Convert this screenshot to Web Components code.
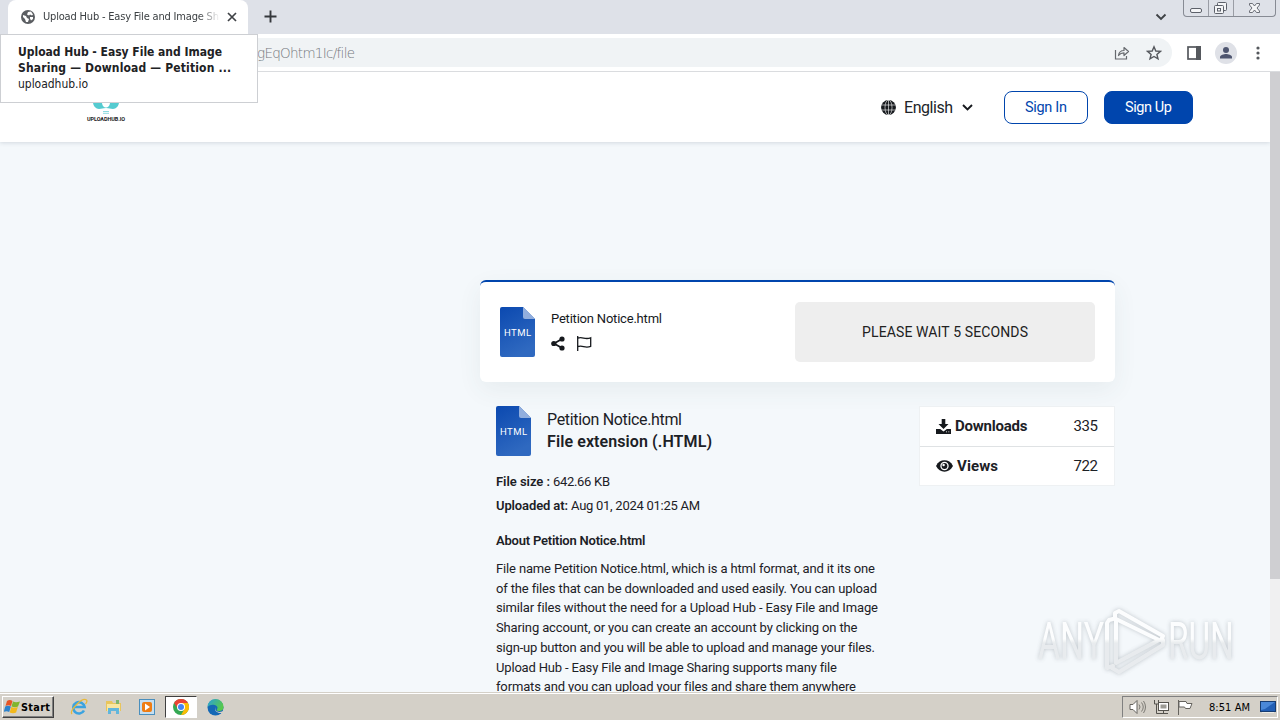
<!DOCTYPE html>
<html lang="en">
<head>
<meta charset="utf-8">
<title>Upload Hub</title>
<style>
  body {
    margin: 0;
    width: 1280px;
    height: 720px;
    overflow: hidden;
    background: #f4f8fb;
    color: #212529;
    font-family: Roboto, "Liberation Sans", sans-serif;
  }
</style>
</head>
<body>
<desktop-screen>
  <browser-chrome slot="chrome"></browser-chrome>
  <site-header slot="page"></site-header>
  <download-card slot="page"></download-card>
  <file-details slot="page"></file-details>
  <task-bar slot="taskbar"></task-bar>
</desktop-screen>

<script>
class BaseElement extends HTMLElement {
  constructor() {
    super();
    this.attachShadow({ mode: 'open' });
  }

  connectedCallback() {
    this.shadowRoot.innerHTML = this.render();
  }
}

// one line of text, tracked so that it fills the width given in "w"
class FitText extends BaseElement {
  render() {
    return `
      <style>
        :host { display: block; white-space: nowrap; width: max-content; }
        span { display: inline-block; }
      </style>
      <span><slot></slot></span>
    `;
  }

  connectedCallback() {
    super.connectedCallback();
    const span = this.shadowRoot.querySelector('span');
    const target = parseFloat(this.getAttribute('w'));
    const count = this.textContent.length;
    const natural = span.getBoundingClientRect().width;
    if (natural && count > 1) {
      span.style.letterSpacing = `${(target - natural) / (count - 1)}px`;
      this.style.width = `${target}px`;
    }
  }
}

class DesktopScreen extends BaseElement {
  render() {
    return `
      <style>
        :host { display: flex; flex-direction: column; height: 720px; position: relative; overflow: hidden; }
        .view { flex: 1; min-height: 0; display: flex; overflow: hidden; }
        .page { flex: 1; overflow: hidden; background: #f4f8fb; }
        .scroll { width: 10px; background: #f0f0f1; }
        .thumb { height: 507px; background: #cfcfd2; }
        any-run { position: absolute; left: 1030px; top: 600px; }
      </style>
      <slot name="chrome"></slot>
      <div class="view">
        <div class="page"><slot name="page"></slot></div>
        <div class="scroll"><div class="thumb"></div></div>
      </div>
      <slot name="taskbar"></slot>
      <any-run></any-run>
    `;
  }
}

class BrowserChrome extends BaseElement {
  render() {
    return `
      <style>
        :host { display: block; height: 72px; position: relative; z-index: 2; color: #3c4043;
          font-family: "DejaVu Sans Condensed", "DejaVu Sans", sans-serif; }
        svg { display: block; flex: none; }
        .strip { height: 34px; background: #dee1e8; display: flex; align-items: flex-start; }
        .tab { margin-left: 8px; width: 240px; height: 34px; box-sizing: border-box; background: #fff;
          border-radius: 8px 8px 0 0; display: flex; align-items: center; padding-left: 13px; }
        .title { width: 177px; margin-left: 8px; overflow: hidden; font-size: 11px; line-height: 18px;
          -webkit-mask-image: linear-gradient(90deg, #000 88%, transparent); mask-image: linear-gradient(90deg, #000 88%, transparent); }
        .close { margin-left: 7px; }
        .plus { margin: 10px 0 0 16px; }
        .down { margin: 13px 0 0 auto; }
        .win { margin: 0 4px 0 16px; width: 93px; height: 17px; box-sizing: border-box; border: 1px solid #878b94;
          border-top: 0; border-radius: 0 0 4px 4px; display: flex; }
        .bar { height: 37px; background: #fff; border-bottom: 1px solid #dadcdf; display: flex; align-items: center; }
        .omni { width: 1172px; height: 29px; background: #f0f3f5; border-radius: 0 15px 15px 0; box-sizing: border-box;
          display: flex; align-items: center; padding: 0 10px 0 257px; color: #74787d; }
        .url { font-family: "DejaVu Sans", sans-serif; font-size: 13.500px; font-weight: 200; }
        .tip { position: absolute; left: 0; top: 34px; width: 258px; height: 69px; box-sizing: border-box; background: #fff;
          border: 1px solid #cdcfd3; padding: 9px 0 0 17px; font-size: 12px; line-height: 16px; color: #202124; }
        .tip b { display: block; font-size: 12px; }
      </style>
      <div class="strip">
        <div class="tab">
          <svg width="14" height="14" viewBox="0 0 14 14"><circle cx="7" cy="7" r="7" fill="#5b5e62"/><path d="M2 5l3 1 1 2 2 1-1 3-2 0-1-3-2-2zM7 2l3-.5 2 3-1 1-2-1-1 1-2-1zM9 7l3 0 0 2-2 1.500-1-2z" fill="#fff"/></svg>
          <div class="title"><fit-text w="176">Upload Hub - Easy File and Image Sh</fit-text></div>
          <svg class="close" width="10" height="10" viewBox="0 0 10 10"><path d="M1 1l8 8M9 1L1 9" stroke="#3f4246" stroke-width="1.700"/></svg>
        </div>
        <svg class="plus" width="13" height="13" viewBox="0 0 13 13"><path d="M6.500 .5v12M.5 6.500h12" stroke="#35383c" stroke-width="1.900"/></svg>
        <svg class="down" width="12" height="8" viewBox="0 0 12 8"><path d="M1.500 1.500L6 6l4.500-4.500" fill="none" stroke="#3f4246" stroke-width="1.900"/></svg>
        <div class="win">
          <svg width="91" height="16" viewBox="0 -1 91 16" fill="none" stroke="#5d616a">
            <path d="M24.500 -1v16M49.500 -1v16" stroke="#9a9da5"/>
            <rect x="6.500" y="7.500" width="11" height="4" rx="1.500" fill="#f4f5f7"/>
            <rect x="33.500" y="1.500" width="9" height="8" rx="1" fill="#f4f5f7"/>
            <rect x="30.500" y="4.500" width="9" height="8" rx="1" fill="#f4f5f7"/><rect x="33.500" y="7.500" width="3" height="2.500"/>
            <path d="M65.500 2.500h3l2 2.500 2-2.500h3v1.500l-2.500 3 2.500 3v1.500h-3l-2-2.500-2 2.500h-3v-1.500l2.500-3-2.500-3z" fill="#f4f5f7" stroke-width=".9"/>
          </svg>
        </div>
      </div>
      <div class="bar">
        <div class="omni">
          <fit-text class="url" w="98">gEqOhtm1Ic/file</fit-text>
          <svg style="margin-left:auto" width="16" height="14" viewBox="0 0 16 14" fill="none" stroke="#66696e" stroke-width="1.200"><path d="M1.500 4v9h11V10"/><path d="M4.500 9.500c.5-3.500 2-5 5.500-5V1.500l4.500 4-4.500 4V6.800c-2.500 0-4 .7-5.500 2.700z" stroke-linejoin="round"/></svg>
          <svg style="margin-left:16px" width="16" height="16" viewBox="0 0 16 16"><path d="M8 1.800l1.800 4.200 4.600.4-3.500 3 1.100 4.500-4-2.400-4 2.400 1.100-4.500-3.500-3 4.600-.4z" fill="none" stroke="#55585d" stroke-width="1.400"/></svg>
        </div>
        <svg style="margin-left:15px" width="14" height="14" viewBox="0 0 14 14"><rect x="1" y="1" width="12" height="12" fill="#fff" stroke="#55585d" stroke-width="1.700"/><path d="M9 0h5v14H9z" fill="#55585d"/></svg>
        <svg style="margin-left:14px" width="22" height="22" viewBox="0 0 22 22"><circle cx="11" cy="11" r="11" fill="#dfe1e7"/><circle cx="11" cy="8" r="3" fill="#4f5670"/><path d="M5 16.500v-1.500c0-2 4-3 6-3s6 1 6 3v1.500z" fill="#4f5670"/></svg>
        <svg style="margin-left:19px" width="4" height="14" viewBox="0 0 4 14" fill="#55585d"><circle cx="2" cy="2" r="1.600"/><circle cx="2" cy="7" r="1.600"/><circle cx="2" cy="12" r="1.600"/></svg>
      </div>
      <div class="tip">
        <b><fit-text w="204">Upload Hub - Easy File and Image</fit-text></b>
        <b><fit-text w="213">Sharing — Download — Petition ...</fit-text></b>
        <fit-text w="70">uploadhub.io</fit-text>
      </div>
    `;
  }
}

class SiteHeader extends BaseElement {
  render() {
    return `
      <style>
        :host { display: flex; align-items: center; height: 70px; background: #fff; padding: 0 77px 0 87px;
          box-shadow: 0 1px 4px rgba(60, 80, 100, .18); position: relative; font-size: 16px; }
        .logo { align-self: flex-start; padding-top: 22px; }
        svg { display: block; }
        .logo fit-text { font-size: 5.500px; line-height: 8px; font-weight: 700; margin-top: 1px; color: #222; }
        .logo svg { margin: 0 auto; }
        .lang { display: flex; align-items: center; margin-left: auto; margin-right: 31px; gap: 8px; }
        .btn { box-sizing: border-box; height: 33px; border: 1px solid #0045ad; border-radius: 8px; display: flex;
          align-items: center; justify-content: center; font-size: 14.500px; color: #0045ad; }
        .in { width: 84px; margin-right: 16px; }
        .up { width: 89px; background: #0045ad; color: #fff; }
      </style>
      <div class="logo">
        <svg width="28" height="20" viewBox="0 0 28 20"><path d="M1 8h9c0 4 2 5.500 4 5.500s4-1.500 4-5.500h9c0 4-3 7-6 7-3 0-3.500-1-7-1s-4 1-7 1c-3 0-6-3-6-7z" fill="#55cbd0"/><path d="M11 17.500h6M11 19.300h6" stroke="#8ddade"/></svg>
        <fit-text w="38">UPLOADHUB.IO</fit-text>
      </div>
      <div class="lang">
        <svg width="15" height="15" viewBox="0 0 15 15"><circle cx="7.500" cy="7.500" r="7.400" fill="#16191d"/><path d="M0 5h15M0 10h15M7.500 0v15" stroke="#fff" stroke-width=".6"/><ellipse cx="7.500" cy="7.500" rx="3.500" ry="7.500" fill="none" stroke="#fff" stroke-width=".6"/></svg>
        <fit-text w="49">English</fit-text>
        <svg style="margin-left:1px" width="11" height="7" viewBox="0 0 11 7"><path d="M1 1l4.500 4.500L10 1" fill="none" stroke="#16191d" stroke-width="1.900"/></svg>
      </div>
      <div class="btn in"><fit-text w="42">Sign In</fit-text></div>
      <div class="btn up"><fit-text w="47">Sign Up</fit-text></div>
    `;
  }
}

class FileIcon extends BaseElement {
  render() {
    return `
      <style>
        :host { display: block; width: 35px; height: 50px; flex: none; }
        svg { display: block; }
        text { font: 400 9.500px Roboto, sans-serif; fill: #fff; }
      </style>
      <svg width="35" height="50" viewBox="0 0 35 50">
        <defs><linearGradient id="g" x1="0" y1="0" x2=".4" y2="1"><stop offset="0" stop-color="#0b49b0"/><stop offset="1" stop-color="#2f69c0"/></linearGradient></defs>
        <path d="M2 0h21l12 12v36a2 2 0 0 1-2 2H2a2 2 0 0 1-2-2V2a2 2 0 0 1 2-2z" fill="url(#g)"/>
        <path d="M23 0l12 12H25a2 2 0 0 1-2-2z" fill="#91aede"/>
        <text x="4" y="29" textLength="27">HTML</text>
      </svg>
    `;
  }
}

class DownloadCard extends BaseElement {
  render() {
    return `
      <style>
        :host { display: flex; align-items: center; box-sizing: border-box; width: 635px; height: 102px; margin: 138px 0 0 480px;
          padding: 0 20px; background: #fff; border-top: 2px solid #0045ad; border-radius: 6px;
          box-shadow: 0 8px 24px rgba(60, 80, 90, .07); }
        .info { margin: 0 0 3px 16px; font-size: 13px; line-height: 18px; color: #16191d; }
        .icons { display: flex; gap: 11px; margin-top: 8px; align-items: center; }
        .wait { margin-left: auto; width: 300px; height: 60px; background: #eee; border-radius: 5px; display: flex;
          align-items: center; justify-content: center; font-size: 14px; color: #212121; }
      </style>
      <file-icon></file-icon>
      <div class="info">
        <fit-text w="111">Petition Notice.html</fit-text>
        <div class="icons">
          <svg width="14" height="15" viewBox="0 0 14 15" fill="#16191d"><path d="M11 3L3 7.500 11 12" fill="none" stroke="#16191d" stroke-width="1.800"/><circle cx="11" cy="3" r="2.600"/><circle cx="2.800" cy="7.500" r="2.600"/><circle cx="11" cy="12" r="2.600"/></svg>
          <svg width="16" height="15" viewBox="0 0 16 15" fill="none" stroke="#16191d" stroke-width="1.300"><path d="M1.700 0v15M1.700 2.200c5-2 7 2 13-.4v8.500c-6 2.500-8-1.700-13 .4"/></svg>
        </div>
      </div>
      <div class="wait"><fit-text w="166">PLEASE WAIT 5 SECONDS</fit-text></div>
    `;
  }
}

class StatRow extends BaseElement {
  render() {
    return `
      <style>
        :host { display: flex; align-items: center; justify-content: space-between; flex: 1; padding: 0 16px; font-size: 15px; }
        .label { display: flex; align-items: center; gap: 4px; font-weight: 700; }
      </style>
      <div class="label"><slot name="icon"></slot><slot name="label"></slot></div>
      <slot></slot>
    `;
  }
}

class FileDetails extends BaseElement {
  render() {
    const lines = [
      ['File name Petition Notice.html, which is a html format, and it its one', 379],
      ['of the files that can be downloaded and used easily. You can upload', 380.5],
      ['similar files without the need for a Upload Hub - Easy File and Image', 381.5],
      ['Sharing account, or you can create an account by clicking on the', 361.5],
      ['sign-up button and you will be able to upload and manage your files.', 378.5],
      ['Upload Hub - Easy File and Image Sharing supports many file', 340.5],
      ['formats and you can upload your files and share them anywhere', 359.5]
    ];
    return `
      <style>
        :host { display: flex; margin: 24px 0 0 496px; width: 619px; font-size: 13px; color: #1c2126; }
        svg { display: block; }
        .main { flex: 1; }
        .head { display: flex; gap: 16px; height: 50px; }
        .name { font-size: 16px; line-height: 22px; padding-top: 3px; }
        .row { display: flex; gap: 3px; line-height: 24px; }
        .meta { margin-top: 14px; }
        b, .about { font-weight: 600; }
        .about { line-height: 20px; margin-top: 13px; }
        .text { margin-top: 8px; line-height: 19.700px; }
        .stats { width: 196px; height: 80px; box-sizing: border-box; background: #fff; border: 1px solid #eef1f3;
          display: flex; flex-direction: column; }
        .line { height: 1px; background: #dfe2e4; }
      </style>
      <div class="main">
        <div class="head">
          <file-icon></file-icon>
          <div class="name">
            <fit-text w="135">Petition Notice.html</fit-text>
            <b><fit-text w="165">File extension (.HTML)</fit-text></b>
          </div>
        </div>
        <div class="meta">
          <div class="row"><b><fit-text w="54">File size :</fit-text></b><fit-text w="57">642.66 KB</fit-text></div>
          <div class="row"><b><fit-text w="72">Uploaded at:</fit-text></b><fit-text w="129">Aug 01, 2024 01:25 AM</fit-text></div>
        </div>
        <div class="about"><fit-text w="149.500">About Petition Notice.html</fit-text></div>
        <div class="text">${lines.map(([text, w]) => `<fit-text w="${w}">${text}</fit-text>`).join('')}</div>
      </div>
      <div class="stats">
        <stat-row>
          <svg slot="icon" width="15" height="15" viewBox="0 0 15 15" fill="#16191d"><path d="M5.700 0h3.600v5H12.500L7.500 10 2.500 5H5.700z"/><path d="M0 10h4.200l3.300 2.600L10.800 10H15v5H0z"/><path d="M10 12.800h1M12.300 12.800h1" stroke="#fff" stroke-width=".8"/></svg>
          <fit-text slot="label" w="72.500">Downloads</fit-text>
          <fit-text w="24.500">335</fit-text>
        </stat-row>
        <div class="line"></div>
        <stat-row>
          <svg slot="icon" width="17" height="12" viewBox="0 0 17 12"><path d="M0 6C2 2 5 .3 8.500 .3S15 2 17 6c-2 4-5 5.700-8.500 5.700S2 10 0 6z" fill="#16191d"/><circle cx="8.500" cy="6" r="4.200" fill="#fff"/><circle cx="8.500" cy="6" r="2.900" fill="#16191d"/><circle cx="7.600" cy="5" r="1.200" fill="#fff"/></svg>
          <fit-text slot="label" w="41">Views</fit-text>
          <fit-text w="24.500">722</fit-text>
        </stat-row>
      </div>
    `;
  }
}

class AnyRun extends BaseElement {
  render() {
    return `
      <style>
        :host { display: block; filter: drop-shadow(0 0 2px rgba(110, 120, 130, .5)); opacity: .8; }
        svg { display: block; overflow: visible; }
        text { font: 400 52px Roboto, sans-serif; fill: url(#w); }
      </style>
      <svg width="240" height="80" viewBox="0 0 240 80">
        <defs><linearGradient id="w" gradientUnits="userSpaceOnUse" x1="0" y1="20" x2="0" y2="62"><stop offset=".45" stop-color="#fff"/><stop offset=".55" stop-color="#e6e9eb"/></linearGradient>
        <linearGradient id="t" gradientUnits="userSpaceOnUse" x1="0" y1="-39" x2="0" y2="3"><stop offset=".45" stop-color="#fff"/><stop offset=".55" stop-color="#e6e9eb"/></linearGradient></defs>
        <text style="fill:url(#t)" transform="translate(8 59) scale(.65 1)">ANY</text>
        <text style="fill:url(#t)" transform="translate(138 59) scale(.64 1)">RUN</text>
        <g fill="none" stroke="url(#w)" stroke-width="4" stroke-linejoin="round" stroke-linecap="round">
          <path d="M86 19V63L129 40z"/>
          <path d="M85 18V13l4-2 44 25-2 4"/>
          <path d="M83 19l-4 1-2 3v45l6-2"/>
          <path d="M82 68l7 4 44-27v-5"/>
        </g>
      </svg>
    `;
  }
}

class TaskBar extends BaseElement {
  render() {
    return `
      <style>
        :host { display: flex; align-items: center; height: 28px; box-sizing: border-box; background: #d4d0c8; border-top: 1px solid #d4d0c8;
          box-shadow: inset 0 1px #fff; padding: 1px 2px 0; font-family: "DejaVu Sans Condensed", "DejaVu Sans", sans-serif; color: #000; }
        svg { display: block; flex: none; }
        .start { box-sizing: border-box; width: 52px; height: 22px; border: 1px solid; border-color: #fff #404040 #404040 #fff;
          box-shadow: inset -1px -1px #808080; display: flex; align-items: center; font-weight: 700; font-size: 11px; padding-left: 1px; }
        .apps { display: flex; align-items: center; margin-left: 8px; }
        .app { width: 34px; height: 22px; display: flex; align-items: center; justify-content: center; }
        .app.on { width: 32px; box-sizing: border-box; background: #fff; border: 1px solid; border-color: #404040 #fff #fff #404040; margin: 0 1px; }
        .tray { margin-left: auto; box-sizing: border-box; width: 156px; height: 22px; border: 1px solid; border-color: #808080 #fff #fff #808080;
          display: flex; align-items: center; padding-left: 6px; font-size: 11px; }
      </style>
      <div class="start">
        <svg width="17" height="16" viewBox="0 0 17 16"><path d="M3 2c2-1.500 4-1 5.500 0L7 7c-2-1-3.500-1-5.500 0z" fill="#e65525"/><path d="M9 2.500c2 1 4 1 7 0l-2 5c-2 1-4 1-6.500 0z" fill="#80b52d"/><path d="M1.200 7.500c2-1 3.500-1 5.700 0l-1.700 5.500c-2-1-3.500-1-5.500 0z" fill="#2c82cc"/><path d="M7.300 8c2 1 4 1 6.500 0l-1.700 5.500c-2 1-4 1-6.400 0z" fill="#f3b91c"/></svg>
        <fit-text style="font-size:10.800px" w="29">Start</fit-text>
      </div>
      <div class="apps">
        <div class="app"><svg width="18" height="18" viewBox="0 0 18 18" fill="none"><path d="M14 12.500A5.700 5.700 0 1 1 14.600 9H4" stroke="#3ba3e0" stroke-width="2.600"/><path d="M2 16C-1 13 12-1 16.500 2c1 .8 0 3-1 4" stroke="#e8b93a" stroke-width="1.300"/></svg></div>
        <div class="app"><svg width="17" height="16" viewBox="0 0 17 16"><path d="M1 2h6l1 2h8v8H1z" fill="#e8c55c"/><path d="M2 5h13v7H2z" fill="#f8e6a0"/><path d="M3 15V9h11v6h-3v-3H6v3z" fill="#62b6dc"/><path d="M11 1h3v4h-3z" fill="#7fb66d"/></svg></div>
        <div class="app"><svg width="16" height="16" viewBox="0 0 16 16"><rect x=".5" y=".5" width="15" height="15" fill="#c5dff1" stroke="#4a8fbd"/><rect x="3" y="3" width="10" height="10" rx="2" fill="#ef7d13"/><path d="M6 4.500l5 3.500-5 3.500z" fill="#fff"/></svg></div>
        <div class="app on"><svg width="16" height="16" viewBox="0 0 16 16"><circle cx="8" cy="8" r="8" fill="#34a853"/><path d="M1.070 4A8 8 0 0 1 14.930 4H8L5 10z" fill="#ea4335"/><path d="M14.930 4A8 8 0 0 1 8 16l3.500-6L8 4z" fill="#fbbc04"/><circle cx="8" cy="8" r="4" fill="#fff"/><circle cx="8" cy="8" r="3" fill="#4285f4"/></svg></div>
        <div class="app"><svg width="17" height="17" viewBox="0 0 17 17"><defs><linearGradient id="e" x1="0" y1="0" x2="1" y2=".5"><stop offset="0" stop-color="#299fdd"/><stop offset="1" stop-color="#57c94b"/></linearGradient></defs><circle cx="8.500" cy="8.500" r="8" fill="#1468b5"/><path d="M.5 8A8 8 0 0 1 16.500 8c0 3-2 4-4.500 4-3 0-2-1.500-1.500-3C11 6 4 4 .5 8z" fill="url(#e)"/><path d="M9 8c-2 3 1 6 6 4.500l1.500-.5-1 2C11 14.500 6 12 9 8z" fill="#d4d0c8"/></svg></div>
      </div>
      <div class="tray">
        <svg width="17" height="16" viewBox="0 0 17 16" fill="#fff" stroke="#65635e"><path d="M1 5.500h3l4-4v13l-4-4H1z"/><path d="M10 5.500q2 2.500 0 5M12.500 3.500q3.500 4.500 0 9M14.500 2q4 6 0 12" fill="none" stroke-width=".8"/></svg>
        <svg style="margin-left:7px" width="17" height="16" viewBox="0 0 17 16" fill="#fff" stroke="#55534e"><rect x="5.500" y="3.500" width="10" height="8"/><rect x="7.500" y="5.500" width="6" height="4" fill="#9c9a94" stroke="none"/><path d="M6 14.500h9M10.500 12v2"/><path d="M1.500 1v4h4V1M3.500 5v9.500H6" fill="none"/></svg>
        <svg style="margin-left:7px" width="17" height="16" viewBox="0 0 17 16" fill="#fff" stroke="#65635e"><path d="M1.500 1v15"/><path d="M2 2.500h7l1 2h5l-2 5H8.500l-1-1.500H2z"/></svg>
        <fit-text style="margin-left:15px" w="41">8:51 AM</fit-text>
        <svg style="margin-left:10px" width="16" height="14" viewBox="0 0 16 14"><rect x=".5" y="1.500" width="15" height="10" fill="#225fb5" stroke="#163c72"/><path d="M1 2h14L5 9 1 10z" fill="#4a88d8"/><path d="M2 12.500h12" stroke="#ecebe6"/></svg>
      </div>
    `;
  }
}

customElements.define('fit-text', FitText);
customElements.define('file-icon', FileIcon);
customElements.define('stat-row', StatRow);
customElements.define('any-run', AnyRun);
customElements.define('browser-chrome', BrowserChrome);
customElements.define('site-header', SiteHeader);
customElements.define('download-card', DownloadCard);
customElements.define('file-details', FileDetails);
customElements.define('task-bar', TaskBar);
customElements.define('desktop-screen', DesktopScreen);
</script>
</body>
</html>
